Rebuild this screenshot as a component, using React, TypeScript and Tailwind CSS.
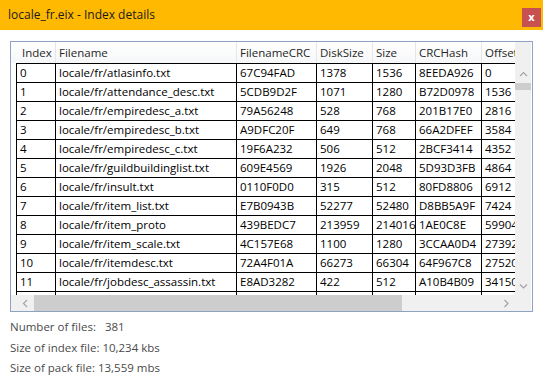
import React from 'react';

type Row = [string, string, string, string, string, string, string];

const rows: Row[] = [
  ['0', 'locale/fr/atlasinfo.txt', '67C94FAD', '1378', '1536', '8EEDA926', '0'],
  ['1', 'locale/fr/attendance_desc.txt', '5CDB9D2F', '1071', '1280', 'B72D0978', '1536'],
  ['2', 'locale/fr/empiredesc_a.txt', '79A56248', '528', '768', '201B17E0', '2816'],
  ['3', 'locale/fr/empiredesc_b.txt', 'A9DFC20F', '649', '768', '66A2DFEF', '3584'],
  ['4', 'locale/fr/empiredesc_c.txt', '19F6A232', '506', '512', '2BCF3414', '4352'],
  ['5', 'locale/fr/guildbuildinglist.txt', '609E4569', '1926', '2048', '5D93D3FB', '4864'],
  ['6', 'locale/fr/insult.txt', '0110F0D0', '315', '512', '80FD8806', '6912'],
  ['7', 'locale/fr/item_list.txt', 'E7B0943B', '52277', '52480', 'D8BB5A9F', '7424'],
  ['8', 'locale/fr/item_proto', '439BEDC7', '213959', '214016', '1AE0C8E', '59904'],
  ['9', 'locale/fr/item_scale.txt', '4C157E68', '1100', '1280', '3CCAA0D4', '273920'],
  ['10', 'locale/fr/itemdesc.txt', '72A4F01A', '66273', '66304', '64F967C8', '275200'],
  ['11', 'locale/fr/jobdesc_assassin.txt', 'E8AD3282', '422', '512', 'A10B4B09', '341504'],
  ['', '', '', '', '', '', ''],
];

const headers = ['Index', 'Filename', 'FilenameCRC', 'DiskSize', 'Size', 'CRCHash', 'Offset'];
const widths = ['w-[39px]', 'w-[181px]', 'w-[80px]', 'w-[56px]', 'w-[43px]', 'w-[66px]', 'w-[60px]'];
const headWidths = ['w-[45px]', 'w-[181px]', 'w-[80px]', 'w-[56px]', 'w-[43px]', 'w-[66px]', 'w-[60px]'];

const Chevron = ({ dir }: { dir: 'up' | 'down' | 'left' | 'right' }) => {
  const d = {
    up: 'M1 5 L4.5 1.5 L8 5',
    down: 'M1 1.5 L4.5 5 L8 1.5',
    left: 'M5 1 L1.5 4.5 L5 8',
    right: 'M1.5 1 L5 4.5 L1.5 8',
  }[dir];
  const horiz = dir === 'up' || dir === 'down';
  return (
    <svg width={horiz ? 9 : 7} height={horiz ? 7 : 9} viewBox={horiz ? '0 0 9 7' : '0 0 7 9'} fill="none">
      <path d={d} stroke="#a2a2a2" strokeWidth="1.1" />
    </svg>
  );
};

const App: React.FC = () => {
  return (
    <div className="w-[543px] h-[387px] bg-white overflow-hidden font-['Open_Sans',sans-serif] text-[11.5px] text-black">
      {/* title bar */}
      <div className="h-[30px] bg-[#ffb900] flex items-center justify-between pl-[8px] pr-[2px]">
        <span className="text-[12px] text-[#1a1a1a]">locale_fr.eix - Index details</span>
        <div className="w-[19px] h-[19px] mt-[5px] bg-[#c75050] text-white text-[11px] font-bold flex items-center justify-center leading-none pb-[2px]">
          x
        </div>
      </div>

      {/* list view */}
      <div className="mt-[11px] ml-[10px] w-[523px] h-[271px] border border-[#8ea3c2] grid grid-cols-[504px_16px] grid-rows-[253px_16px]">
        <div className="overflow-hidden flex flex-col">
          <div className="h-[21px] flex shrink-0 bg-gradient-to-b from-white to-[#f6f7f8] text-[#262626]">
            {headers.map((h, i) => (
              <div
                key={h}
                className={`${headWidths[i]} shrink-0 h-full border-r border-[#e6e6e6] flex items-center ${i === 0 ? 'pl-[11px]' : 'pl-[3px]'}`}
              >
                {h}
              </div>
            ))}
          </div>
          <div className="ml-[5px] border-l border-t border-black">
            {rows.map((r, ri) => (
              <div key={ri} className="h-[19px] flex border-b border-black">
                {r.map((c, ci) => (
                  <div
                    key={ci}
                    className={`${widths[ci]} shrink-0 border-r border-black pl-[3px] flex items-center whitespace-nowrap overflow-hidden`}
                  >
                    {c}
                  </div>
                ))}
              </div>
            ))}
          </div>
        </div>

        {/* vertical scrollbar */}
        <div className="bg-[#f0f0f0] flex flex-col">
          <div className="h-[24px]" />
          <div className="h-[17px] flex items-center justify-center">
            <Chevron dir="up" />
          </div>
          <div className="h-[7px] bg-[#cdcdcd]" />
          <div className="flex-1" />
          <div className="h-[17px] flex items-center justify-center">
            <Chevron dir="down" />
          </div>
        </div>

        {/* horizontal scrollbar */}
        <div className="bg-[#f0f0f0] flex pl-[6px]">
          <div className="w-[17px] flex items-center justify-center">
            <Chevron dir="left" />
          </div>
          <div className="w-[368px] bg-[#cdcdcd]" />
          <div className="flex-1" />
          <div className="w-[17px] flex items-center justify-center">
            <Chevron dir="right" />
          </div>
        </div>
        <div className="bg-[#f0f0f0]" />
      </div>

      {/* footer */}
      <div className="pl-[10px] pt-[7px] flex flex-col gap-[4px] text-[11.5px] text-[#4a4a4a] leading-[16.5px]">
        <span className="whitespace-pre">Number of files:   381</span>
        <span>Size of index file: 10,234 kbs</span>
        <span>Size of pack file: 13,559 mbs</span>
      </div>
    </div>
  );
};

export default App;
